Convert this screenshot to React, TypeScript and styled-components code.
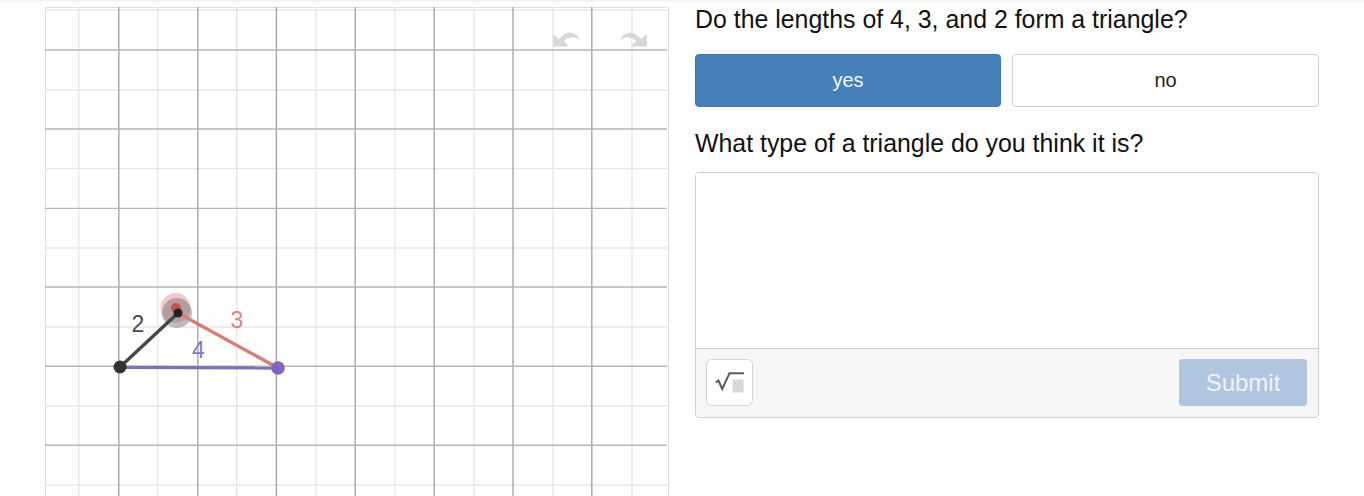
import styled, { createGlobalStyle } from "styled-components";

const GlobalStyle = createGlobalStyle`
  html, body {
    margin: 0;
    padding: 0;
    background: #fff;
    overflow: hidden;
  }
  body {
    font-family: "Liberation Sans", Arial, sans-serif;
  }
`;

const Page = styled.div`
  width: 1364px;
  height: 496px;
  overflow: hidden;
  display: flex;
  flex-direction: column;
`;

const TopShade = styled.div`
  height: 7px;
  flex: none;
  background: linear-gradient(#f1f1f1 0, #fafafa 2px, #fff 4px);
`;

const Content = styled.div`
  display: flex;
  align-items: flex-start;
  padding-left: 45px;
  gap: 26px;
`;

const BoardFrame = styled.div`
  position: relative;
  width: 624px;
  height: 489px;
  flex: none;
`;

const Board = styled.svg`
  display: block;
  width: 624px;
  height: 489px;
`;

const HistoryButton = styled.svg<{ $side: "left" | "right" }>`
  position: absolute;
  top: 23px;
  ${(p) => (p.$side === "left" ? "left: 507px;" : "left: 574px;")}
  width: 29px;
  height: 19px;
  fill: #d8d8d8;
`;

const Questions = styled.div`
  width: 624px;
  flex: none;
`;

const Prompt = styled.h2<{ $top?: number }>`
  margin: ${(p) => p.$top ?? 0}px 0 0;
  font-size: 24.9px;
  line-height: 24px;
  font-weight: 400;
  color: #111;
`;

const Choices = styled.div`
  display: grid;
  grid-template-columns: 306px 307px;
  gap: 11px;
  margin-top: 23px;
`;

const Choice = styled.button<{ $selected?: boolean }>`
  height: 53px;
  padding: 0;
  font: 400 20px "Liberation Sans", Arial, sans-serif;
  border-radius: 4px;
  border: 1px solid ${(p) => (p.$selected ? "#3e77a8" : "#cfcfcf")};
  background: ${(p) => (p.$selected ? "#4580b9" : "#fff")};
  color: ${(p) => (p.$selected ? "#f4f8fc" : "#222")};
`;

const AnswerBox = styled.div`
  margin-top: 17px;
  height: 246px;
  box-sizing: border-box;
  border: 1px solid #cfcfcf;
  border-radius: 4px;
  display: flex;
  flex-direction: column;
  overflow: hidden;
`;

const AnswerInput = styled.div`
  flex: 1;
  background: #fff;
`;

const AnswerBar = styled.div`
  height: 69px;
  flex: none;
  box-sizing: border-box;
  border-top: 1px solid #cfcfcf;
  background: #f6f6f6;
  padding: 10px 11px 0 10px;
  display: flex;
  align-items: flex-start;
  justify-content: space-between;
`;

const MathButton = styled.button`
  width: 47px;
  height: 47px;
  padding: 0;
  display: flex;
  align-items: center;
  justify-content: center;
  border: 1px solid #d4d4d4;
  border-radius: 6px;
  background: #fff;
`;

const SubmitButton = styled.button`
  width: 128px;
  height: 47px;
  padding: 0;
  border: 1px solid #aec5de;
  border-radius: 3px;
  background: #b0c6de;
  color: #eef4fa;
  font: 400 24px "Liberation Sans", Arial, sans-serif;
`;

const majorX = [118.8, 197.8, 276.4, 355.2, 434.2, 513, 591.8];
const minorX = [78.8, 157.8, 236.8, 316, 395, 474, 553, 632];
const majorY = [50, 129, 208.4, 287, 366.2, 445.2];
const minorY = [10, 90, 168.6, 248, 327, 406, 485];

const App = () => {
  return (
    <Page>
      <GlobalStyle />
      <TopShade />
      <Content>
        <BoardFrame>
          <Board viewBox="45 7 624 489">
            <rect x="45.5" y="7.5" width="623" height="500" fill="#fff" stroke="#dedede" />
            {minorX.map((x) => (
              <line key={x} x1={x} x2={x} y1="7" y2="496" stroke="#e6e6e6" strokeWidth="1.3" />
            ))}
            {minorY.map((y) => (
              <line key={y} x1="45" x2="667" y1={y} y2={y} stroke="#e6e6e6" strokeWidth="1.3" />
            ))}
            {majorX.map((x) => (
              <line key={x} x1={x} x2={x} y1="7" y2="496" stroke="#a6a6a6" strokeWidth="1.4" />
            ))}
            {majorY.map((y) => (
              <line key={y} x1="45" x2="667" y1={y} y2={y} stroke="#b6b6b6" strokeWidth="1.4" />
            ))}

            <circle cx="175.5" cy="308" r="15" fill="#e8a5a5" fillOpacity="0.6" />
            <circle cx="177" cy="313" r="15" fill="#6a6a6a" fillOpacity="0.45" />
            <circle cx="176" cy="308" r="5" fill="#c4544f" />

            <line x1="120" y1="367.4" x2="278" y2="368" stroke="#806fc0" strokeWidth="3.4" />
            <line x1="178" y1="313" x2="278" y2="368" stroke="#db7d72" strokeWidth="3.4" />
            <line x1="120" y1="367" x2="178" y2="313" stroke="#474747" strokeWidth="3.4" />
            <circle cx="120" cy="367" r="6.5" fill="#333" />
            <circle cx="278" cy="368" r="6.8" fill="#8163c2" />
            <circle cx="178" cy="313" r="4.5" fill="#222" />

            <text x="138" y="332" textAnchor="middle" fontFamily="Liberation Sans" fontSize="23" fill="#4a4a4a">2</text>
            <text x="237" y="328" textAnchor="middle" fontFamily="Liberation Sans" fontSize="23" fill="#d9867b">3</text>
            <text x="198.5" y="358" textAnchor="middle" fontFamily="Liberation Sans" fontSize="23" fill="#8a76c9">4</text>
          </Board>
          <HistoryButton $side="left" viewBox="0 0 29 19">
            <path d="M1 4 L7 9 C12 2 23 -1 28 10 C22 6 15 7 12 11 L17 16.5 L1 16.5 Z" />
          </HistoryButton>
          <HistoryButton $side="right" viewBox="0 0 29 19">
            <path d="M28 4 L22 9 C17 2 6 -1 1 10 C7 6 14 7 17 11 L12 16.5 L28 16.5 Z" />
          </HistoryButton>
        </BoardFrame>

        <Questions>
          <Prompt>Do the lengths of 4, 3, and 2 form a triangle?</Prompt>
          <Choices>
            <Choice $selected>yes</Choice>
            <Choice>no</Choice>
          </Choices>
          <Prompt $top={24}>What type of a triangle do you think it is?</Prompt>
          <AnswerBox>
            <AnswerInput />
            <AnswerBar>
              <MathButton aria-label="math">
                <svg width="30" height="24" viewBox="0 0 30 24">
                  <rect x="17.5" y="8.5" width="11" height="13" fill="#d9d9d9" />
                  <path d="M0.8 11.5 L3.5 9.6 L7.2 18 L14.5 2.2 H29" fill="none" stroke="#5c5c5c" strokeWidth="2" />
                </svg>
              </MathButton>
              <SubmitButton>Submit</SubmitButton>
            </AnswerBar>
          </AnswerBox>
        </Questions>
      </Content>
    </Page>
  );
};

export default App;
